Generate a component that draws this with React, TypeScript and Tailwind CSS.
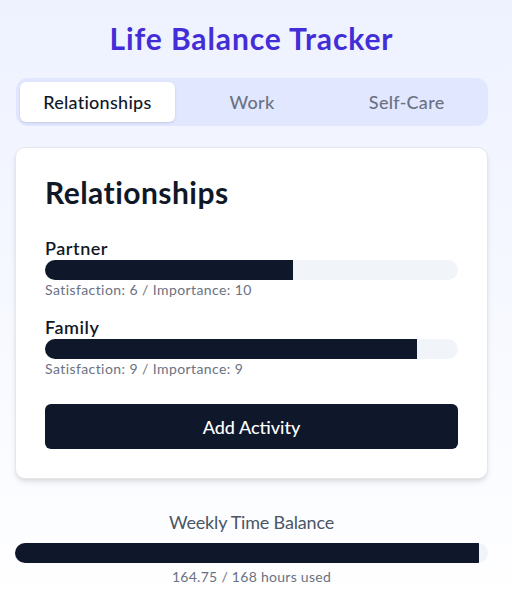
import React, { useState } from 'react';

interface Activity {
    name: string;
    satisfaction: number;
    importance: number;
}

const categories: { [key: string]: Activity[] } = {
    'Relationships': [
        { name: 'Partner', satisfaction: 6, importance: 10 },
        { name: 'Family', satisfaction: 9, importance: 9 },
    ],
    'Work': [
        { name: 'Career', satisfaction: 7, importance: 8 },
    ],
    'Self-Care': [
        { name: 'Exercise', satisfaction: 5, importance: 9 },
    ],
};

const ProgressBar: React.FC<{ value: number; className?: string }> = ({ value, className }) => (
    <div className={`relative w-full overflow-hidden rounded-full bg-slate-100 ${className || 'h-5'}`}>
        <div className="h-full bg-[#0f172a]" style={{ width: `${value}%` }} />
    </div>
);

const App: React.FC = () => {
    const [activeTab, setActiveTab] = useState('Relationships');
    const hoursUsed = 164.75;

    return (
        <div
            className="min-h-screen bg-gradient-to-b from-indigo-50 to-white pl-[15px] pr-[24px] pt-[20px] pb-6"
            style={{ fontFamily: 'Lato, "Noto Sans", sans-serif' }}
        >
            <h1 className="text-center text-[30px] leading-[36px] font-bold tracking-[0.03em] text-indigo-700 mb-[22px]">
                Life Balance Tracker
            </h1>

            <div className="ml-px grid grid-cols-3 rounded-xl bg-indigo-100 p-1">
                {Object.keys(categories).map(tab => (
                    <button
                        key={tab}
                        onClick={() => setActiveTab(tab)}
                        className={`h-10 rounded-md text-lg font-medium tracking-[0.015em] ${activeTab === tab ? 'bg-white text-gray-900 shadow-sm' : 'text-gray-500'}`}
                    >
                        {tab}
                    </button>
                ))}
            </div>

            <div className="mt-[21px] rounded-[10px] border border-gray-200 bg-white p-[29px] shadow-md">
                <h2 className="text-[30px] leading-[30px] font-bold tracking-[0.015em] text-gray-900 mb-[29px]">{activeTab}</h2>
                <div className="space-y-[15px]">
                    {categories[activeTab].map(act => (
                        <div key={act.name}>
                            <p className="text-lg leading-[24px] font-semibold tracking-[0.03em] text-gray-900">{act.name}</p>
                            <ProgressBar value={act.satisfaction * 10} />
                            <p className="text-sm leading-5 tracking-[0.03em] text-gray-500">
                                Satisfaction: {act.satisfaction} / Importance: {act.importance}
                            </p>
                        </div>
                    ))}
                </div>
                <button className="mt-[25px] h-[45px] w-full rounded-md bg-[#0f172a] text-lg font-medium text-white">
                    Add Activity
                </button>
            </div>

            <div className="mt-[31px] text-center">
                <p className="text-lg leading-6 tracking-[-0.01em] text-gray-600 mb-[9px]">Weekly Time Balance</p>
                <ProgressBar value={(hoursUsed / 168) * 100} className="h-5" />
                <p className="mt-1 text-sm leading-5 tracking-[0.02em] text-gray-500">{hoursUsed} / 168 hours used</p>
            </div>
        </div>
    );
};

export default App;
